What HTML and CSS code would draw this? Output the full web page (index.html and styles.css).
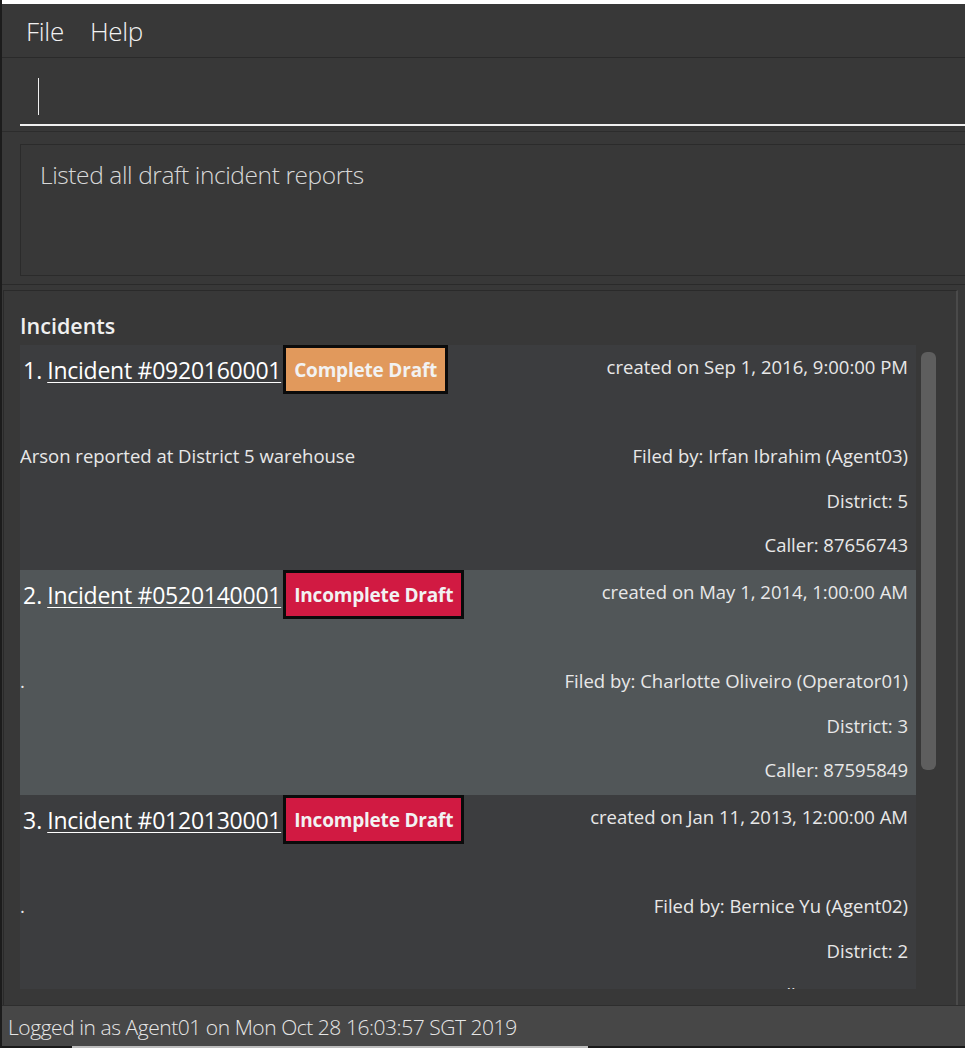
FILE: index.html
```html
<!DOCTYPE html>
<html>
<head>
<meta charset="utf-8">
<link rel="stylesheet" href="styles.css">
</head>
<body>
<div class="window">
  <div class="topstrip"></div>
  <div class="menubar">
    <span class="menu-item">File</span>
    <span class="menu-item">Help</span>
  </div>
  <div class="command">
    <div class="field"><span class="caret"></span></div>
  </div>
  <div class="result-area">
    <div class="result-box">Listed all draft incident reports</div>
  </div>
  <div class="panel-area">
    <div class="panel">
      <div class="panel-title">Incidents</div>
      <div class="list-wrap">
        <div class="list">
          <div class="cell odd">
            <div class="title"><span class="num">1.</span><span class="link">Incident #0920160001</span><span class="badge complete">Complete Draft</span></div>
            <div class="r1">created on Sep 1, 2016, 9:00:00 PM</div>
            <div class="desc">Arson reported at District 5 warehouse</div>
            <div class="r3">Filed by: Irfan Ibrahim (Agent03)</div>
            <div class="r4">District: 5</div>
            <div class="r5">Caller: 87656743</div>
          </div>
          <div class="cell even">
            <div class="title"><span class="num">2.</span><span class="link">Incident #0520140001</span><span class="badge incomplete">Incomplete Draft</span></div>
            <div class="r1">created on May 1, 2014, 1:00:00 AM</div>
            <div class="desc">.</div>
            <div class="r3">Filed by: Charlotte Oliveiro (Operator01)</div>
            <div class="r4">District: 3</div>
            <div class="r5">Caller: 87595849</div>
          </div>
          <div class="cell odd">
            <div class="title"><span class="num">3.</span><span class="link">Incident #0120130001</span><span class="badge incomplete">Incomplete Draft</span></div>
            <div class="r1">created on Jan 11, 2013, 12:00:00 AM</div>
            <div class="desc">.</div>
            <div class="r3">Filed by: Bernice Yu (Agent02)</div>
            <div class="r4">District: 2</div>
            <div class="r5">Caller: 90000765</div>
          </div>
        </div>
        <div class="scroll-track"><div class="thumb"></div></div>
      </div>
    </div>
  </div>
  <div class="status">Logged in as Agent01 on Mon Oct 28 16:03:57 SGT 2019</div>
  <div class="bottomstrip"><div class="bottom-seg"></div></div>
</div>
</body>
</html>
```

FILE: styles.css
```css
html, body {
  margin: 0;
  padding: 0;
  background: #383838;
  overflow: hidden;
}
.window {
  width: 963px;
  height: 1048px;
  border-left: 2px solid #1c1c1c;
  display: flex;
  flex-direction: column;
  font-family: "Open Sans", "Noto Sans", sans-serif;
  color: #ffffff;
}
.topstrip {
  height: 4px;
  background: #ffffff;
  flex: none;
}
.menubar {
  height: 53px;
  flex: none;
  background: #383838;
  border-bottom: 1px solid #2a2a2a;
  display: flex;
  align-items: center;
  padding-left: 24px;
  gap: 26px;
}
.menu-item {
  font-weight: 300;
  font-size: 26px;
  color: #f2f2f2;
  letter-spacing: -0.3px;
}
.command {
  height: 74px;
  flex: none;
  background: #383838;
  padding-left: 18px;
  border-bottom: 1px solid #2c2c2c;
  box-sizing: border-box;
  display: flex;
  align-items: flex-start;
}
.field {
  flex: 1;
  height: 68px;
  border-bottom: 2px solid #f0f0f0;
  box-sizing: border-box;
  padding-top: 20px;
  padding-left: 18px;
}
.caret {
  display: block;
  width: 1px;
  height: 37px;
  background: #f0f0f0;
}
.result-area {
  height: 153px;
  flex: none;
  box-sizing: border-box;
  padding: 12px 0 8px 18px;
  border-bottom: 1px solid #2a2a2a;
  background: #383838;
}
.result-box {
  height: 132px;
  box-sizing: border-box;
  border: 1px solid #2b2b2b;
  border-right: none;
  padding: 13px 0 0 19px;
  font-weight: 300;
  font-size: 24.5px;
  color: #d8d8d8;
  letter-spacing: -0.4px;
}
.panel-area {
  height: 720px;
  flex: none;
  box-sizing: border-box;
  padding: 5px 7px 0 1px;
  background: #383838;
}
.panel {
  height: 715px;
  box-sizing: border-box;
  border: 1px solid #2a2a2a;
  border-right: 2px solid #4a4a4a;
  border-bottom: none;
  padding: 0 0 16px 16px;
  display: flex;
  flex-direction: column;
}
.panel-title {
  height: 54px;
  flex: none;
  box-sizing: border-box;
  padding-top: 20px;
  font-size: 21.5px;
  font-weight: 600;
  color: #f0f0f0;
}
.list-wrap {
  flex: 1;
  display: flex;
  gap: 5px;
  min-height: 0;
}
.list {
  width: 896px;
  overflow: hidden;
}
.cell {
  height: 225px;
  display: grid;
  grid-template-columns: 1fr auto;
  grid-template-rows: 44px 44px 45px 44px 44px;
  align-content: start;
  padding-right: 8px;
  font-size: 18.5px;
  color: #e8e8e8;
}
.cell.odd { background: #3c3d3f; }
.cell.even { background: #515658; }
.title {
  grid-column: 1;
  grid-row: 1;
  align-self: start;
  display: flex;
  align-items: center;
  height: 49px;
  padding-left: 3px;
  font-size: 23px;
  color: #ffffff;
  white-space: nowrap;
}
.num {
  margin-right: 5px;
}
.link {
  text-decoration: underline;
  text-underline-offset: 3px;
  text-decoration-thickness: 1px;
  letter-spacing: -0.25px;
}
.badge {
  margin-left: 2px;
  height: 49px;
  box-sizing: border-box;
  border: 3px solid #0b0b0b;
  padding: 0 8px;
  display: flex;
  align-items: center;
  font-size: 19px;
  font-weight: 700;
  color: #f2f2f2;
  letter-spacing: -0.2px;
}
.badge.complete { background: #e1995c; }
.badge.incomplete { background: #d11a42; }
.r1, .r3, .r4, .r5 {
  grid-column: 2;
  text-align: right;
  align-self: center;
  white-space: nowrap;
}
.r1 { grid-row: 1; margin-top: -2px; }
.r3 { grid-row: 3; }
.r4 { grid-row: 4; }
.r5 { grid-row: 5; }
.desc {
  grid-column: 1;
  grid-row: 3;
  align-self: center;
  white-space: nowrap;
}
.scroll-track {
  width: 15px;
  flex: none;
  padding-top: 7px;
}
.thumb {
  height: 418px;
  background: #5e5e5e;
  border-radius: 6px;
}
.status {
  height: 41px;
  flex: none;
  background: #474747;
  border-top: 1px solid #2e2e2e;
  box-sizing: border-box;
  padding: 7px 0 0 6px;
  font-weight: 300;
  font-size: 21px;
  color: #e6e6e6;
  letter-spacing: -0.45px;
}
.bottomstrip {
  height: 2px;
  flex: none;
  background: #1a1a1a;
  padding-left: 70px;
}
.bottom-seg {
  width: 516px;
  height: 2px;
  background: #bdbdbd;
}
```
